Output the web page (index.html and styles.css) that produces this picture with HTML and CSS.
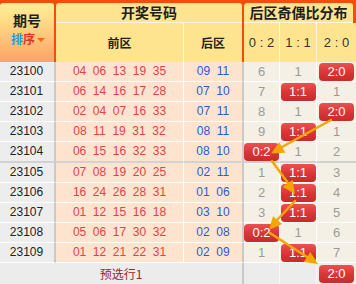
FILE: index.html
```html
<!DOCTYPE html>
<html lang="zh-CN">
<head>
<meta charset="utf-8">
<title>后区奇偶比分布</title>
<link rel="stylesheet" href="styles.css">
</head>
<body>
<div class="chart">
  <div class="head">
    <div class="h-issue">
      <div class="h-issue-title">期号</div>
      <div class="h-sort"><span class="s-blue">排</span><span class="s-red">序</span><span class="s-caret"></span></div>
    </div>
    <div class="h-sec">
      <div class="h-title">开奖号码</div>
      <div class="h-sub h-sub-draw"><div class="h-cell">前区</div><div class="h-cell">后区</div></div>
    </div>
    <div class="h-sec h-sec-dist">
      <div class="h-title h-title-dist">后区奇偶比分布</div>
      <div class="h-sub h-sub-dist"><div class="h-cell h-ratio">0 : 2</div><div class="h-cell h-ratio">1 : 1</div><div class="h-cell h-ratio">2 : 0</div></div>
    </div>
  </div>

  <div class="rows">
    <div class="row">
      <div class="c c-issue">23100</div>
      <div class="c c-front"><span>04</span><span>06</span><span>13</span><span>19</span><span>35</span></div>
      <div class="c c-back"><span>09</span><span>11</span></div>
      <div class="c c-val">6</div><div class="c c-val">1</div><div class="c c-val c-last"><span class="badge">2:0</span></div>
    </div>
    <div class="row">
      <div class="c c-issue">23101</div>
      <div class="c c-front"><span>06</span><span>14</span><span>16</span><span>17</span><span>28</span></div>
      <div class="c c-back"><span>07</span><span>10</span></div>
      <div class="c c-val">7</div><div class="c c-val"><span class="badge">1:1</span></div><div class="c c-val c-last">1</div>
    </div>
    <div class="row">
      <div class="c c-issue">23102</div>
      <div class="c c-front"><span>02</span><span>04</span><span>07</span><span>16</span><span>33</span></div>
      <div class="c c-back"><span>07</span><span>11</span></div>
      <div class="c c-val">8</div><div class="c c-val">1</div><div class="c c-val c-last"><span class="badge">2:0</span></div>
    </div>
    <div class="row">
      <div class="c c-issue">23103</div>
      <div class="c c-front"><span>08</span><span>11</span><span>19</span><span>31</span><span>32</span></div>
      <div class="c c-back"><span>08</span><span>11</span></div>
      <div class="c c-val">9</div><div class="c c-val"><span class="badge">1:1</span></div><div class="c c-val c-last">1</div>
    </div>
    <div class="row row-sep">
      <div class="c c-issue">23104</div>
      <div class="c c-front"><span>06</span><span>15</span><span>16</span><span>32</span><span>33</span></div>
      <div class="c c-back"><span>08</span><span>10</span></div>
      <div class="c c-val"><span class="badge">0:2</span></div><div class="c c-val">1</div><div class="c c-val c-last">2</div>
    </div>
    <div class="row">
      <div class="c c-issue">23105</div>
      <div class="c c-front"><span>07</span><span>08</span><span>19</span><span>20</span><span>25</span></div>
      <div class="c c-back"><span>02</span><span>11</span></div>
      <div class="c c-val">1</div><div class="c c-val"><span class="badge">1:1</span></div><div class="c c-val c-last">3</div>
    </div>
    <div class="row">
      <div class="c c-issue">23106</div>
      <div class="c c-front"><span>16</span><span>24</span><span>26</span><span>28</span><span>31</span></div>
      <div class="c c-back"><span>01</span><span>06</span></div>
      <div class="c c-val">2</div><div class="c c-val"><span class="badge">1:1</span></div><div class="c c-val c-last">4</div>
    </div>
    <div class="row">
      <div class="c c-issue">23107</div>
      <div class="c c-front"><span>01</span><span>12</span><span>15</span><span>16</span><span>18</span></div>
      <div class="c c-back"><span>03</span><span>10</span></div>
      <div class="c c-val">3</div><div class="c c-val"><span class="badge">1:1</span></div><div class="c c-val c-last">5</div>
    </div>
    <div class="row">
      <div class="c c-issue">23108</div>
      <div class="c c-front"><span>05</span><span>06</span><span>17</span><span>30</span><span>32</span></div>
      <div class="c c-back"><span>02</span><span>08</span></div>
      <div class="c c-val"><span class="badge">0:2</span></div><div class="c c-val">1</div><div class="c c-val c-last">6</div>
    </div>
    <div class="row">
      <div class="c c-issue">23109</div>
      <div class="c c-front"><span>01</span><span>12</span><span>21</span><span>22</span><span>31</span></div>
      <div class="c c-back"><span>02</span><span>09</span></div>
      <div class="c c-val">1</div><div class="c c-val"><span class="badge">1:1</span></div><div class="c c-val c-last">7</div>
    </div>
  </div>

  <div class="foot">
    <div class="f-label">预选行1</div>
    <div class="f-cell"></div>
    <div class="f-cell"></div>
    <div class="f-cell f-last"><span class="badge">2:0</span></div>
  </div>

  <svg class="trend" width="356" height="284" viewBox="0 0 356 284" aria-hidden="true">
    <g stroke="#f6a500" stroke-width="2.5" stroke-linecap="round" fill="none">
      <line x1="331" y1="120" x2="282" y2="147"/>
      <line x1="272" y1="161" x2="288" y2="183"/>
      <line x1="295" y1="201" x2="277" y2="220"/>
      <line x1="270" y1="233" x2="307" y2="257"/>
    </g>
    <g fill="#f6a500">
      <polygon points="271,153.5 279.3,142.3 285.3,152.7"/>
      <polygon points="295,194 282.6,186.8 292.5,179.9"/>
      <polygon points="269,230 273,216.3 282,224.1"/>
      <polygon points="318,264 303.8,262 310.3,252"/>
    </g>
  </svg>
</div>
</body>
</html>
```

FILE: styles.css
```css
html, body {
  margin: 0;
  padding: 0;
  background: #ffffff;
}

body {
  width: 356px;
  height: 284px;
  overflow: hidden;
  font-family: "Liberation Sans", Arial, sans-serif;
}

.chart {
  position: relative;
  width: 356px;
}

/* ---------- header ---------- */
.head {
  display: grid;
  grid-template-columns: 54px 186px 112px;
  column-gap: 2px;
  height: 62px;
  padding-top: 3px;
  box-sizing: border-box;
  background: #f24e0a;
}

.h-issue {
  border-radius: 3px 3px 0 0;
  background: linear-gradient(#ffee95, #ffe08a 25%, #ffa263);
  display: flex;
  flex-direction: column;
  align-items: center;
  padding-top: 9px;
  box-sizing: border-box;
  font-family: "Noto Sans CJK SC", sans-serif;
  font-weight: bold;
}

.h-issue-title {
  font-size: 14px;
  line-height: 17px;
  color: #1e1e1e;
}

.h-sort {
  display: flex;
  align-items: center;
  font-size: 12px;
  line-height: 16px;
  margin-top: 2px;
  margin-left: 2px;
}

.s-blue { color: #1f9af0; }
.s-red { color: #e0322d; }

.s-caret {
  width: 0;
  height: 0;
  margin-left: 2px;
  margin-top: 1px;
  border-left: 4px solid transparent;
  border-right: 4px solid transparent;
  border-top: 4px solid #f2680f;
}

.h-sec {
  display: flex;
  flex-direction: column;
  border-radius: 3px 3px 0 0;
  overflow: hidden;
  background: #ffe490;
}

.h-sec-dist {
  background: transparent;
}

.h-title {
  height: 19px;
  line-height: 19px;
  border-bottom: 1px solid #fff8e0;
  text-align: center;
  font-family: "Noto Sans CJK SC", sans-serif;
  font-weight: bold;
  font-size: 14px;
  color: #1e1e1e;
}

.h-title-dist {
  margin-right: 3px;
  border-radius: 3px 3px 0 0;
  background: #ffe490;
}

.h-sub {
  flex: 1;
  display: grid;
  background: #ffe490;
}

.h-sub-draw {
  grid-template-columns: 128px 58px;
}

.h-sub-dist {
  grid-template-columns: 36px 37px 39px;
}

.h-cell {
  display: flex;
  align-items: center;
  justify-content: center;
  border-right: 1px solid #fff8e0;
  font-family: "Noto Sans CJK SC", sans-serif;
  font-weight: bold;
  font-size: 12px;
  color: #222;
}

.h-cell:last-child {
  border-right: 0;
}

.h-ratio {
  font-family: "Liberation Sans", Arial, sans-serif;
  font-weight: normal;
  font-size: 13px;
  color: #333;
}

/* ---------- rows ---------- */
.row {
  display: grid;
  grid-template-columns: 56px 128px 60px 36px 37px 39px;
  height: 20px;
}

.c {
  box-sizing: border-box;
  height: 20px;
  border-bottom: 1px solid #ffffff;
  display: flex;
  align-items: center;
  justify-content: center;
  font-size: 12px;
  line-height: 19px;
}

.row-sep {
  height: 21px;
}

.row-sep .c {
  height: 21px;
  border-bottom: 2px solid #d2d2d2;
}

.c-issue {
  background: #eeeded;
  border-right: 2px solid #c9c9c9;
  color: #222;
  padding-right: 1px;
}

.c-front,
.c-back {
  background: #fee4ce;
  gap: 6.6px;
}

.c-front {
  border-right: 1px solid #ffffff;
  color: #e3404a;
}

.c-back {
  border-right: 2px solid #c9c9c9;
  color: #2a5bd6;
}

.c-val {
  background: #f5f0e5;
  border-right: 1px solid #ffffff;
  color: #9b9b9b;
  font-size: 13px;
}

.c-last {
  border-right: 0;
}

.badge {
  display: block;
  width: 35px;
  height: 18px;
  line-height: 18px;
  border-radius: 4px;
  background: linear-gradient(#ec5050, #d83535 55%, #c82a2a);
  color: #ffffff;
  text-align: center;
  font-size: 13px;
}

/* ---------- footer ---------- */
.foot {
  display: grid;
  grid-template-columns: 244px 36px 37px 39px;
  height: 21px;
  background: #ececec;
}

.f-label {
  box-sizing: border-box;
  border-right: 2px solid #c9c9c9;
  display: flex;
  align-items: center;
  justify-content: center;
  padding-bottom: 1px;
  font-family: "Noto Sans CJK SC", sans-serif;
  font-size: 12px;
  color: #a0232a;
}

.f-cell {
  box-sizing: border-box;
  border-right: 1px solid #f8f8f8;
  display: flex;
  align-items: center;
  justify-content: center;
}

.f-last {
  border-right: 0;
}

/* ---------- trend overlay ---------- */
.trend {
  position: absolute;
  left: 0;
  top: 0;
  pointer-events: none;
}
```
